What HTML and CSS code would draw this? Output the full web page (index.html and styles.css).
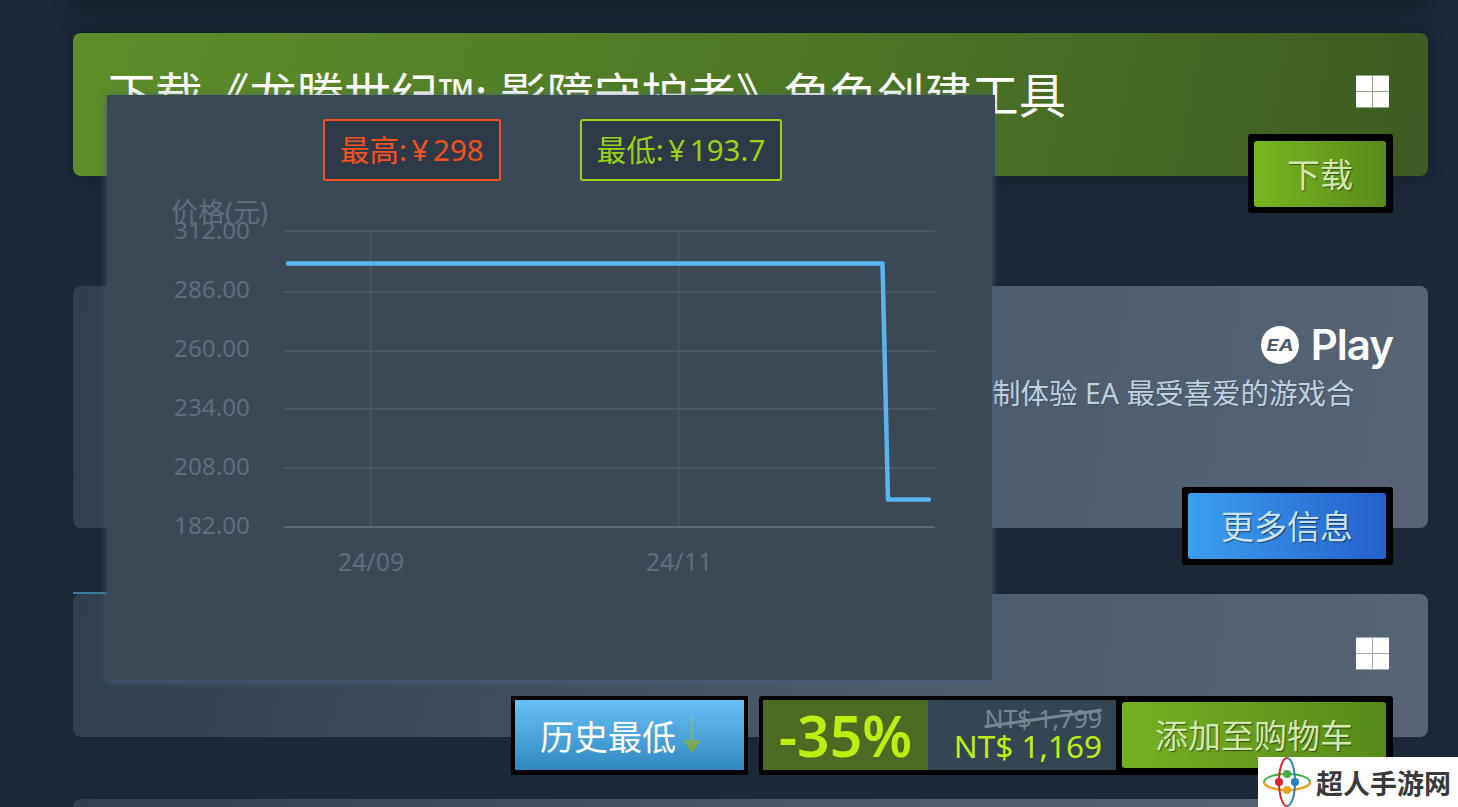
FILE: index.html
```html
<!DOCTYPE html>
<html lang="zh-CN">
<head>
    <meta charset="UTF-8">
    <meta name="viewport" content="width=device-width, initial-scale=1.0">
    <title>Steam 价格历史</title>
    <link rel="stylesheet" href="styles.css">
</head>
<body>
    <div class="page">
        <div class="card card-green">
            <div class="card-head">
                <h1 class="card-title">下载《龙腾世纪™: 影障守护者》角色创建工具</h1>
                <svg class="win-icon" viewBox="0 0 33 33"><rect width="33" height="33" rx="1" fill="#fff" fill-opacity="0.45"/><path d="M1 1h15v15H0V2a1 1 0 0 1 1-1zM17 1h15a1 1 0 0 1 1 1v14H17zM0 17h16v15H1a1 1 0 0 1-1-1zM17 17h16v14a1 1 0 0 1-1 1H17z" fill="#fff"/></svg>
            </div>
            <div class="card-actions">
                <div class="btn-wrap"><a class="btn btn-green btn-small">下载</a></div>
            </div>
        </div>

        <div class="card card-ea">
            <div class="ea-logo">
                <svg class="ea-badge" viewBox="0 0 38 38">
                    <circle cx="19" cy="19" r="19" fill="#fff"/>
                    <text x="5.5" y="25" textLength="27" lengthAdjust="spacingAndGlyphs" class="ea-mark">EA</text>
                </svg>
                <span class="ea-play">Play</span>
            </div>
            <p class="ea-text">制体验 EA 最受喜爱的游戏合</p>
            <div class="card-actions">
                <div class="btn-wrap"><a class="btn btn-blue">更多信息</a></div>
            </div>
        </div>

        <div class="card-line"></div>
        <div class="card card-buy">
            <div class="card-head card-head-end">
                <svg class="win-icon" viewBox="0 0 33 33"><rect width="33" height="33" rx="1" fill="#fff" fill-opacity="0.45"/><path d="M1 1h15v15H0V2a1 1 0 0 1 1-1zM17 1h15a1 1 0 0 1 1 1v14H17zM0 17h16v15H1a1 1 0 0 1-1-1zM17 17h16v14a1 1 0 0 1-1 1H17z" fill="#fff"/></svg>
            </div>
            <div class="card-actions buy-row">
                <div class="low-wrap">
                    <a class="btn-low">历史最低
                        <svg class="low-arrow" viewBox="0 0 22 36">
                            <defs>
                                <linearGradient id="arrowFill" x1="0" y1="0" x2="0" y2="1">
                                    <stop offset="0" stop-color="#8fc48a" stop-opacity="0.4"/>
                                    <stop offset="1" stop-color="#7fa62a"/>
                                </linearGradient>
                            </defs>
                            <path d="M9.5 0h3v23H20L11 36 2 23h7.500z" fill="url(#arrowFill)"/>
                        </svg>
                    </a>
                </div>
                <div class="price-wrap">
                    <div class="discount">-35%</div>
                    <div class="prices">
                        <div class="price-old">NT$ 1,799</div>
                        <div class="price-new">NT$ 1,169</div>
                    </div>
                    <a class="btn btn-green btn-cart">添加至购物车</a>
                </div>
            </div>
        </div>

        <div class="card card-last"></div>

        <div class="popup">
            <div class="badges">
                <div class="badge badge-high">最高: ¥ 298</div>
                <div class="badge badge-low">最低: ¥ 193.7</div>
            </div>
            <svg class="chart" viewBox="107 181 885 499">
                <g class="grid">
                    <line x1="284" x2="935" y1="231" y2="231"/>
                    <line x1="284" x2="935" y1="292" y2="292"/>
                    <line x1="284" x2="935" y1="351" y2="351"/>
                    <line x1="284" x2="935" y1="409" y2="409"/>
                    <line x1="284" x2="935" y1="468" y2="468"/>
                    <line x1="370.5" x2="370.5" y1="231" y2="527"/>
                    <line x1="678.5" x2="678.5" y1="231" y2="527"/>
                </g>
                <line class="axis" x1="284" x2="935" y1="527" y2="527"/>
                <text class="axis-name" x="171" y="222">价格(元)</text>
                <g class="y-labels">
                    <text x="250" y="239">312.00</text>
                    <text x="250" y="298">286.00</text>
                    <text x="250" y="357">260.00</text>
                    <text x="250" y="416">234.00</text>
                    <text x="250" y="475">208.00</text>
                    <text x="250" y="534">182.00</text>
                </g>
                <g class="x-labels">
                    <text x="371" y="571">24/09</text>
                    <text x="679" y="571">24/11</text>
                </g>
                <polyline class="price-line" points="288,263.5 882.5,263.5 888,499.5 929,499.5"/>
            </svg>
        </div>

        <div class="watermark">
            <svg class="wm-logo" viewBox="0 0 50 50">
                <path d="M2 25a23 8 0 0 1 46 0" fill="none" stroke="#3fae49" stroke-width="2"/>
                <path d="M2 25a23 8 0 0 0 46 0" fill="none" stroke="#e8a21c" stroke-width="2.5"/>
                <path d="M25 1a8 24 0 0 0 0 48" fill="none" stroke="#d8232a" stroke-width="2"/>
                <path d="M25 1a8 24 0 0 1 0 48" fill="none" stroke="#2a7fc9" stroke-width="2"/>
                <circle cx="25" cy="17" r="4" fill="#3fae49"/>
                <circle cx="17" cy="25" r="4" fill="#d8232a"/>
                <circle cx="33" cy="25" r="4" fill="#2a7fc9"/>
                <circle cx="25" cy="33" r="4" fill="#e8a21c"/>
            </svg>
            <span class="wm-text">超人手游网</span>
        </div>
    </div>
</body>
</html>
```

FILE: styles.css
```css
* {
    box-sizing: border-box;
}
html, body {
    margin: 0;
    height: 807px;
    overflow: hidden;
}
body {
    background: #1b2838;
    font-family: "Noto Sans", "Noto Sans CJK SC", sans-serif;
}
.page {
    position: relative;
    height: 807px;
    overflow: hidden;
    padding: 33px 30px 0 73px;
}
/* shadow of the card scrolled off above */
.page::before {
    content: "";
    position: absolute;
    top: -20px;
    left: 85px;
    right: 42px;
    height: 20px;
    box-shadow: 0 0 26px 8px rgba(0, 0, 0, 0.3);
}

/* cards */
.card {
    position: relative;
    display: flex;
    flex-direction: column;
    height: 143px;
    padding: 0 35px;
    border-radius: 8px;
    background: linear-gradient(100deg, #303f4e 0%, #4b5b6b 60%, #566475 100%);
}
.card > * {
    flex: none;
}
.card-green {
    margin-bottom: 110px;
    background: linear-gradient(100deg, #5e8e2a 0%, #476e24 70%, #3d5b23 100%);
    box-shadow: 0 0 18px rgba(0, 0, 0, 0.25);
}
.card-ea {
    height: 242px;
}
.card-line {
    height: 2px;
    margin: 64px 0 0;
    background: linear-gradient(to right, #3f7c9e 0, #3f7c9e 40px, transparent 800px);
}
.card-last {
    height: 8px;
    margin-top: 62px;
    border-radius: 8px 8px 0 0;
}
.card-head {
    display: flex;
    justify-content: space-between;
    height: 101px;
    padding-top: 32px;
}
.card-head-end {
    justify-content: flex-end;
    height: 102px;
}
.card-title {
    margin: 0;
    font-size: 47.2px;
    font-weight: 400;
    line-height: 60px;
    color: #fff;
    white-space: nowrap;
}
.win-icon {
    width: 33px;
    height: 33px;
    margin: 10px -31px 0 0;
    position: relative;
    left: -35px;
}
.card-head-end .win-icon {
    margin-top: 11px;
}
.card-actions {
    display: flex;
    justify-content: flex-end;
    gap: 11px;
}

/* buttons */
.btn-wrap {
    padding: 6px 7px 6px 6px;
    border-radius: 3px;
    background: #000;
}
.btn {
    display: block;
    height: 66px;
    padding: 0 33px;
    border-radius: 3px;
    font-size: 33px;
    line-height: 68px;
    white-space: nowrap;
    text-shadow: 1px 1px 1px rgba(0, 0, 0, 0.5);
}
.btn-blue {
    background: linear-gradient(to right, #3b9fee, #2560cb);
    color: #c7e2f6;
}
.btn-green {
    background: linear-gradient(to right, #78b522, #598c19);
    color: #d2e8ae;
}
.btn-small {
    margin-top: 1px;
}

/* EA card */
.ea-logo {
    display: flex;
    align-items: center;
    justify-content: flex-end;
    gap: 12px;
    height: 38px;
    margin-top: 40px;
}
.ea-badge {
    width: 38px;
    height: 38px;
}
.ea-mark {
    font-family: "Inter", sans-serif;
    font-size: 16px;
    font-weight: 700;
    font-style: italic;
    fill: #4d5d6d;
}
.ea-play {
    font-family: "Inter", sans-serif;
    font-size: 42px;
    font-weight: 600;
    line-height: 38px;
    letter-spacing: -1px;
    color: #fff;
}
.ea-text {
    height: 116px;
    margin: 7px 0 0 884px;
    font-size: 28.5px;
    line-height: 44px;
    color: #bdd0e0;
    white-space: nowrap;
    text-shadow: 1px 1px 0 rgba(0, 0, 0, 0.2);
}

/* buy row */
.low-wrap {
    padding: 4px;
    background: #000;
}
.btn-low {
    display: flex;
    align-items: center;
    gap: 5px;
    width: 229px;
    height: 70px;
    padding-left: 25px;
    background: linear-gradient(to bottom, #68c0f6, #2f88bf);
    font-size: 34px;
    color: #fff;
    white-space: nowrap;
}
.low-arrow {
    width: 22px;
    height: 36px;
}
.price-wrap {
    display: flex;
    align-items: center;
    padding: 4px 7px 5px 4px;
    border-radius: 3px;
    background: #000;
}
.discount {
    width: 165px;
    height: 70px;
    background: #4c6b22;
    font-size: 57px;
    font-weight: 600;
    line-height: 70px;
    text-align: center;
    color: #beee11;
}
.prices {
    position: relative;
    width: 188px;
    height: 70px;
    padding: 2px 14px 0 0;
    background: #344654;
    text-align: right;
}
.price-old {
    position: relative;
    height: 30px;
    font-size: 25px;
    line-height: 32px;
    color: #738895;
}
.price-old::after {
    content: "";
    position: absolute;
    top: 15px;
    right: 0;
    width: 118px;
    height: 3px;
    background: #738895;
    transform: rotate(-8deg);
}
.price-new {
    font-size: 31.5px;
    line-height: 28px;
    color: #beee11;
}
.btn-cart {
    margin-left: 6px;
    background: linear-gradient(to right, #75b022, #578a1a);
}

/* price history popup */
.popup {
    position: absolute;
    top: 95px;
    left: 107px;
    width: 885px;
    height: 585px;
    padding-top: 24px;
    background: #3b4856;
    box-shadow: 0 2px 8px #45607f;
}
.popup::before {
    content: "";
    position: absolute;
    top: 0;
    right: -3px;
    width: 10px;
    height: 81px;
    background: #3b4856;
}
.badges {
    display: flex;
    gap: 79px;
    padding-left: 216px;
}
.badge {
    height: 62px;
    padding: 0 15px;
    border: 2px solid;
    border-radius: 3px;
    background: #2f3a49;
    font-size: 29.5px;
    line-height: 58px;
    word-spacing: -3px;
    white-space: nowrap;
}
.badge-high {
    border-color: #f4511e;
    color: #f4511e;
}
.badge-low {
    border-color: #97d317;
    color: #97d317;
}
.chart {
    display: block;
    width: 885px;
    height: 499px;
}
.chart text {
    font-size: 24.3px;
    fill: #5e6e7f;
}
.chart .axis-name {
    font-size: 27px;
}
.chart .x-labels text {
    font-size: 25px;
}
.y-labels text {
    text-anchor: end;
}
.x-labels text {
    text-anchor: middle;
}
.grid line {
    stroke: #4a5766;
    stroke-width: 2;
}
.grid line:nth-child(n+6) {
    stroke-width: 1.5;
}
.axis {
    stroke: #5b6978;
    stroke-width: 2;
}
.price-line {
    fill: none;
    stroke: #5ab5ee;
    stroke-width: 4.5;
    stroke-linecap: round;
    stroke-linejoin: round;
}

/* watermark */
.watermark {
    position: absolute;
    right: 0;
    bottom: 0;
    display: flex;
    align-items: center;
    width: 200px;
    height: 50px;
    padding-left: 4px;
    background: #fff;
}
.wm-logo {
    width: 50px;
    height: 50px;
    margin-right: 4px;
}
.wm-text {
    font-family: "Noto Sans CJK SC", sans-serif;
    font-size: 27px;
    font-weight: 700;
    color: #3a3a3a;
    white-space: nowrap;
}
```
